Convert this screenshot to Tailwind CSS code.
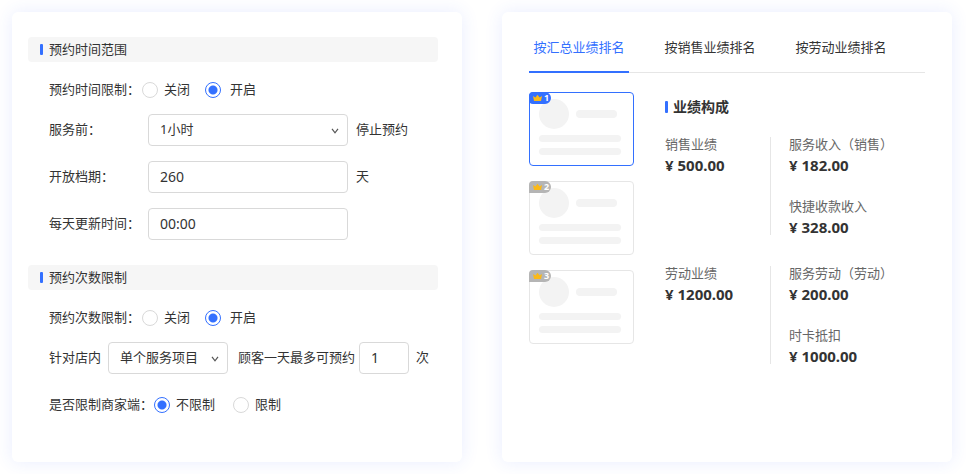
<!DOCTYPE html>
<html lang="zh-CN">
  <head>
    <meta charset="UTF-8">
    <meta name="viewport" content="width=device-width, initial-scale=1.0">
    <script src="https://cdn.jsdelivr.net/npm/@tailwindcss/browser@4"></script>
    <title>预约设置</title>
  </head>

  <body class="bg-white font-['Noto_Sans','Noto_Sans_CJK_SC',sans-serif] text-[13px] text-[#333]">
    <div class="grid grid-cols-2 gap-10 py-3 pl-3 pr-3.5">
      <!-- booking settings -->
      <form class="rounded-md bg-white pt-[25px] pb-[41px] pl-4 pr-6 shadow-[0_0_18px_rgba(51,92,255,0.11)]">
        <h2 class="flex h-[25px] items-center gap-1.5 rounded bg-[#f6f6f6] pl-3">
          <span class="h-[11px] w-[3px] rounded-[1px] bg-[#3370ff]"></span>
          预约时间范围
        </h2>
        <div class="mt-3 mb-[25px] pl-[21px]">
          <div class="mb-2 flex h-8 items-center" role="radiogroup" aria-labelledby="time-limit">
            <span id="time-limit" class="mr-0.5">预约时间限制：</span>
            <label class="mr-[15px] flex items-center gap-1.5">
              <input type="radio" name="time-limit" class="size-4 appearance-none rounded-full border border-[#d9d9d9] checked:border-[#3370ff] checked:bg-[radial-gradient(circle,#3370ff_4px,transparent_5px)]">
              关闭
            </label>
            <label class="flex items-center gap-[9px]">
              <input type="radio" name="time-limit" checked class="size-4 appearance-none rounded-full border border-[#d9d9d9] checked:border-[#3370ff] checked:bg-[radial-gradient(circle,#3370ff_4px,transparent_5px)]">
              开启
            </label>
          </div>
          <div class="mb-[15px] flex items-center">
            <label for="before" class="w-[99px]">服务前：</label>
            <div class="relative mr-2 w-[200px]">
              <select id="before" class="h-8 w-full appearance-none rounded border border-[#d9d9d9] bg-white px-[11px]">
                <option>1小时</option>
              </select>
              <svg class="pointer-events-none absolute top-3 right-2 size-2.5" viewBox="0 0 10 10" fill="none" stroke="#555" stroke-width="1.2"><path d="M2 2.8 5 6.8l3-4"/></svg>
            </div>
            停止预约
          </div>
          <div class="mb-[15px] flex items-center">
            <label for="days" class="w-[99px]">开放档期：</label>
            <input id="days" type="text" value="260" class="mr-2 h-8 w-[200px] rounded border border-[#d9d9d9] px-[11px] pb-0.5 text-sm">
            天
          </div>
          <div class="flex items-center">
            <label for="refresh" class="w-[99px]">每天更新时间：</label>
            <input id="refresh" type="text" value="00:00" class="h-8 w-[200px] rounded border border-[#d9d9d9] px-[11px] pb-0.5 text-sm">
          </div>
        </div>

        <h2 class="flex h-[25px] items-center gap-1.5 rounded bg-[#f6f6f6] pl-3">
          <span class="h-[11px] w-[3px] rounded-[1px] bg-[#3370ff]"></span>
          预约次数限制
        </h2>
        <div class="mt-3 pl-[21px]">
          <div class="mb-2 flex h-8 items-center" role="radiogroup" aria-labelledby="count-limit">
            <span id="count-limit" class="mr-0.5">预约次数限制：</span>
            <label class="mr-[15px] flex items-center gap-1.5">
              <input type="radio" name="count-limit" class="size-4 appearance-none rounded-full border border-[#d9d9d9] checked:border-[#3370ff] checked:bg-[radial-gradient(circle,#3370ff_4px,transparent_5px)]">
              关闭
            </label>
            <label class="flex items-center gap-[9px]">
              <input type="radio" name="count-limit" checked class="size-4 appearance-none rounded-full border border-[#d9d9d9] checked:border-[#3370ff] checked:bg-[radial-gradient(circle,#3370ff_4px,transparent_5px)]">
              开启
            </label>
          </div>
          <div class="mb-[15px] flex items-center whitespace-nowrap">
            <label for="scope" class="mr-[7px]">针对店内</label>
            <div class="relative mr-2.5 w-[120px]">
              <select id="scope" class="h-8 w-full appearance-none rounded border border-[#d9d9d9] bg-white px-[11px]">
                <option>单个服务项目</option>
              </select>
              <svg class="pointer-events-none absolute top-3 right-2 size-2.5" viewBox="0 0 10 10" fill="none" stroke="#555" stroke-width="1.2"><path d="M2 2.8 5 6.8l3-4"/></svg>
            </div>
            <label for="times" class="mr-1">顾客一天最多可预约</label>
            <input id="times" type="text" value="1" class="mr-[7px] h-8 w-[50px] rounded border border-[#d9d9d9] px-[11px] pb-0.5 text-sm">
            次
          </div>
          <div class="flex h-8 items-center" role="radiogroup" aria-labelledby="merchant-limit">
            <span id="merchant-limit" class="mr-px">是否限制商家端：</span>
            <label class="mr-[18px] flex items-center gap-1.5">
              <input type="radio" name="merchant-limit" checked class="size-4 appearance-none rounded-full border border-[#d9d9d9] checked:border-[#3370ff] checked:bg-[radial-gradient(circle,#3370ff_4px,transparent_5px)]">
              不限制
            </label>
            <label class="flex items-center gap-1.5">
              <input type="radio" name="merchant-limit" class="size-4 appearance-none rounded-full border border-[#d9d9d9] checked:border-[#3370ff] checked:bg-[radial-gradient(circle,#3370ff_4px,transparent_5px)]">
              限制
            </label>
          </div>
        </div>
      </form>

      <!-- performance ranking -->
      <section class="rounded-md bg-white px-[27px] pt-[13px] shadow-[0_0_18px_rgba(51,92,255,0.11)]">
        <nav class="flex gap-[31px] border-b border-[#e6e6e6]">
          <button type="button" class="-mb-px h-12 w-[100px] border-b-2 border-[#3370ff] text-[#3370ff]">按汇总业绩排名</button>
          <button type="button" class="-mb-px h-12 w-[100px] border-b-2 border-transparent">按销售业绩排名</button>
          <button type="button" class="-mb-px h-12 w-[100px] border-b-2 border-transparent">按劳动业绩排名</button>
        </nav>

        <div class="flex gap-[31px] pt-[19px]">
          <div class="flex w-[105px] flex-col gap-[15px]">
            <button type="button" class="relative h-[74px] rounded border border-[#3370ff] px-[9px] pb-1">
              <span class="absolute -top-px -left-px flex h-3 w-[22px] items-center gap-0.5 rounded-l rounded-r-md bg-[#3370ff] pl-1 text-[9px]/[12px] font-bold text-white">
                <svg class="h-2 w-[9px]" viewBox="0 0 9 8"><path fill="#fbb917" d="M0 2 2.4 3.6 4.5.8l2.1 2.8L9 2 8 7H1z"/></svg>
                1
              </span>
              <span class="flex items-center gap-[7px]">
                <span class="size-[30px] rounded-full bg-[#f3f3f3]"></span>
                <span class="h-2 w-[41px] rounded-full bg-[#f3f3f3]"></span>
              </span>
              <span class="mt-1.5 block h-[7px] w-[82px] rounded-full bg-[#f3f3f3]"></span>
              <span class="mt-1.5 block h-[7px] w-[82px] rounded-full bg-[#f3f3f3]"></span>
            </button>
            <button type="button" class="relative h-[74px] rounded border border-[#e6e6e6] px-[9px] pb-1">
              <span class="absolute -top-px -left-px flex h-3 w-[22px] items-center gap-0.5 rounded-tl rounded-r-md bg-[#b5b5b5] pl-1 text-[9px]/[12px] font-bold text-white">
                <svg class="h-2 w-[9px]" viewBox="0 0 9 8"><path fill="#fbb917" d="M0 2 2.4 3.6 4.5.8l2.1 2.8L9 2 8 7H1z"/></svg>
                2
              </span>
              <span class="flex items-center gap-[7px]">
                <span class="size-[30px] rounded-full bg-[#f3f3f3]"></span>
                <span class="h-2 w-[41px] rounded-full bg-[#f3f3f3]"></span>
              </span>
              <span class="mt-1.5 block h-[7px] w-[82px] rounded-full bg-[#f3f3f3]"></span>
              <span class="mt-1.5 block h-[7px] w-[82px] rounded-full bg-[#f3f3f3]"></span>
            </button>
            <button type="button" class="relative h-[74px] rounded border border-[#e6e6e6] px-[9px] pb-1">
              <span class="absolute -top-px -left-px flex h-3 w-[22px] items-center gap-0.5 rounded-tl rounded-r-md bg-[#b5b5b5] pl-1 text-[9px]/[12px] font-bold text-white">
                <svg class="h-2 w-[9px]" viewBox="0 0 9 8"><path fill="#fbb917" d="M0 2 2.4 3.6 4.5.8l2.1 2.8L9 2 8 7H1z"/></svg>
                3
              </span>
              <span class="flex items-center gap-[7px]">
                <span class="size-[30px] rounded-full bg-[#f3f3f3]"></span>
                <span class="h-2 w-[41px] rounded-full bg-[#f3f3f3]"></span>
              </span>
              <span class="mt-1.5 block h-[7px] w-[82px] rounded-full bg-[#f3f3f3]"></span>
              <span class="mt-1.5 block h-[7px] w-[82px] rounded-full bg-[#f3f3f3]"></span>
            </button>
          </div>

          <div class="flex-1 pt-[5px]">
            <h3 class="mb-5 flex items-center gap-[5px] text-sm/5 font-bold">
              <span class="h-3 w-[3px] rounded-[1px] bg-[#3370ff]"></span>
              业绩构成
            </h3>
            <div class="mb-[31px] flex">
              <dl class="w-[105px]">
                <dt class="mb-1.5 text-[13px]/[14px] text-[#666]">销售业绩</dt>
                <dd class="text-[15px]/[16px] font-bold">¥ 500.00</dd>
              </dl>
              <dl class="flex-1 border-l border-[#e6e6e6] pl-[18px]">
                <dt class="mb-1.5 text-[13px]/[14px] text-[#666]">服务收入（销售）</dt>
                <dd class="mb-[26px] text-[15px]/[16px] font-bold">¥ 182.00</dd>
                <dt class="mb-1.5 text-[13px]/[14px] text-[#666]">快捷收款收入</dt>
                <dd class="text-[15px]/[16px] font-bold">¥ 328.00</dd>
              </dl>
            </div>
            <div class="flex">
              <dl class="w-[105px]">
                <dt class="mb-1.5 text-[13px]/[14px] text-[#666]">劳动业绩</dt>
                <dd class="text-[15px]/[16px] font-bold">¥ 1200.00</dd>
              </dl>
              <dl class="flex-1 border-l border-[#e6e6e6] pl-[18px]">
                <dt class="mb-1.5 text-[13px]/[14px] text-[#666]">服务劳动（劳动）</dt>
                <dd class="mb-[26px] text-[15px]/[16px] font-bold">¥ 200.00</dd>
                <dt class="mb-1.5 text-[13px]/[14px] text-[#666]">时卡抵扣</dt>
                <dd class="text-[15px]/[16px] font-bold">¥ 1000.00</dd>
              </dl>
            </div>
          </div>
        </div>
      </section>
    </div>
  </body>
</html>
